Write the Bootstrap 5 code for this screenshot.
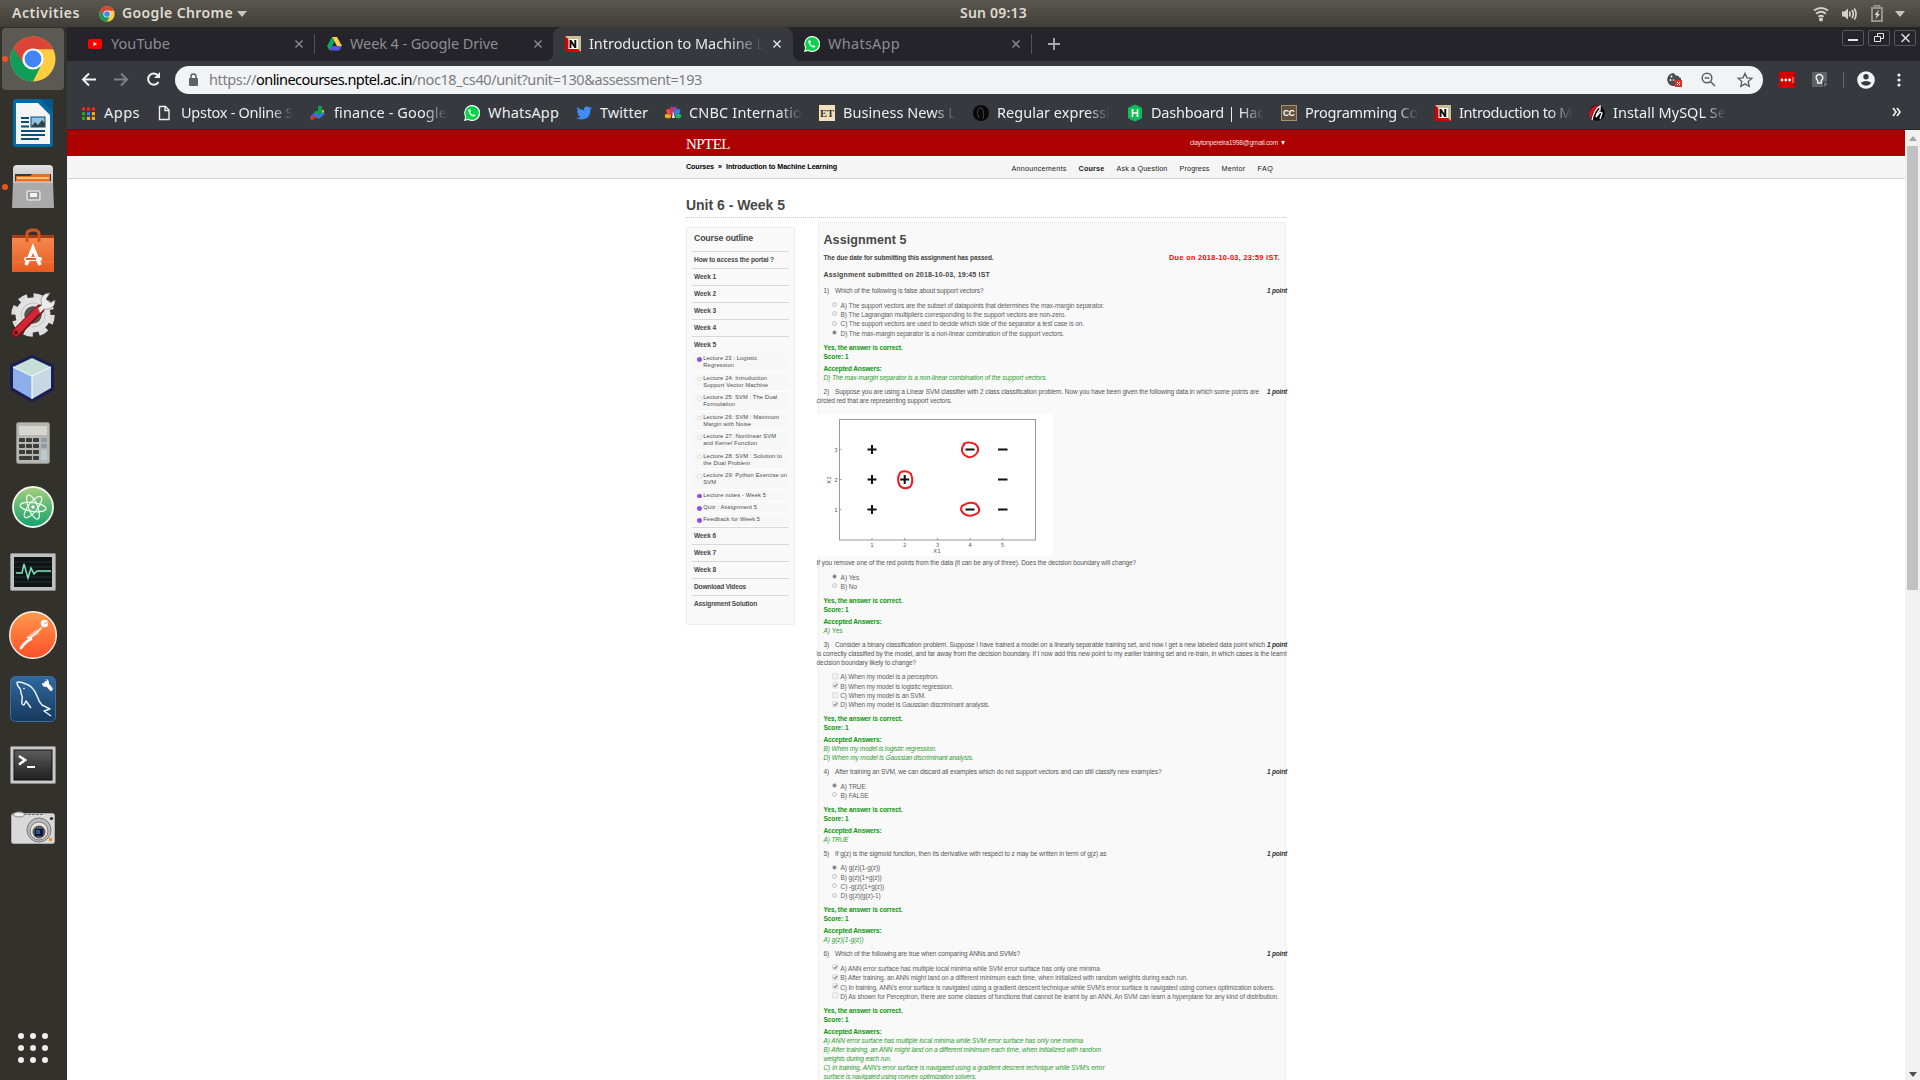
<!DOCTYPE html>
<html lang="en">
<head>
<meta charset="utf-8">
<title>Introduction to Machine Learning - Unit 6 - Week 5</title>
<link href="https://cdn.jsdelivr.net/npm/bootstrap@5.3.0/dist/css/bootstrap.min.css" rel="stylesheet">
<style>
html,body{height:1080px;overflow:hidden}
body{width:1920px;background:#fff;font-family:"Noto Sans","Open Sans",sans-serif;line-height:1}
svg{display:block;flex:none;overflow:visible}
[data-w]{display:inline-block;white-space:nowrap;flex:none}
/* desktop panel */
.panel{height:27px;background:linear-gradient(#5b5750,#403e39);color:#dfdbd2;font-size:14px;font-weight:600;padding:0 15px 0 12px}
.panel>div{flex:1}
.panel .clock{margin-left:70px}
.panel>*>span,.panel .clock{position:relative;top:-.5px}
.dock{width:67px;background:#33312c;flex:none}
.slot{height:64px;width:67px;flex:none;padding-left:1px}
/* browser */
.tabs{height:34px;background:#25242a;font-size:14.5px;color:#8c8d92}
.tab{height:34px;flex:none;padding-bottom:1px}
.tab.current{background:#36393e;color:#e9eaec;border-radius:9px 9px 0 0;width:240px;padding-left:12px;margin-left:7px;position:relative}
.tab.current:before,.tab.current:after{content:"";position:absolute;bottom:0;width:8px;height:8px}
.tab.current:before{left:-8px;background:radial-gradient(circle at 0 0,#25242a 8px,#36393e 8.5px)}
.tab.current:after{right:-8px;background:radial-gradient(circle at 100% 0,#25242a 8px,#36393e 8.5px)}
.vsep{width:1px;height:20px;background:#515257;flex:none}
.fade-end{-webkit-mask-image:linear-gradient(90deg,#000 80%,transparent)}
.winbtn{width:22px;height:16px;border:1px solid #58575c;border-radius:2px}
.tools{height:37px;background:#36393e}
.omni{height:28px;width:1588px;border-radius:14px;background:#f1f3f4;font-size:14.5px;color:#7b7d82}
.marks{height:32px;background:#36393e;border-bottom:1px solid #26282c;gap:17px;font-size:14.5px;color:#eceef0;padding-left:13px;padding-bottom:4px}
.marks .bm{gap:8px;height:28px}
.marks .bm>svg{margin-top:2px}
.marks .bm>span{line-height:20px}
/* course site */
.site{font-family:"Liberation Sans",Arial,sans-serif;color:#484848;width:1838px;height:950px;overflow:hidden}
.wrapw{width:600px;margin-left:619px}
.brandbar{background:#ad0000;height:26px;color:#fff}
.brand{font:15px/26px "Liberation Serif",serif;padding-top:1px}
.mail{font-size:6.8px;color:#f6dede}
.subbar{height:23px;background:#f5f5f5;border-top:1px solid #fff;border-bottom:1px solid #d4d4d4;font-size:7.2px;color:#222}
.unit{height:39px;border-bottom:1px dotted #c9c9c9;font-size:14px;font-weight:700;padding-top:18px;line-height:16px}
.outline-box{width:109px;height:398px;margin-top:9px;border:1px solid #ececec;border-radius:2px;background:#f9f9f9;padding:0 5px}
.outline-box .ttl{height:23px;line-height:20px;font-size:8.8px;font-weight:700;padding-left:2px}
.wk{height:17px;border-top:1px solid #d8d8d8;line-height:16px;font-size:6.6px;font-weight:700;padding-left:2px}
.lecs{height:174px;width:97px}
.lec{height:19.5px;border-bottom:1px solid #fff;background:#f7f7f7;font-size:5.8px;line-height:7px;color:#4c4c4c;padding:2.2px 0 0 5px;gap:1.6px}
.lec.one{height:12.4px}
.lec i{width:4.6px;height:4.6px;border-radius:50%;border:.6px solid #ddd;background:#fff;margin-top:2px;flex:none}
.lec i.on{background:#8a4fe8;border-color:#8a4fe8}
.paper{width:468px;margin-top:4px;height:860px;border:1px solid #efefef;border-radius:2px;background:#f9f9f9}
.ln{height:9px;line-height:9px;font-size:6.5px;display:flex;white-space:nowrap;padding-left:4.5px;color:#555}
.ln.strong{font-weight:700;color:#444}
.ln.wrapped{padding-left:0;margin-left:-2.4px}
.ln .num{width:11.5px;flex:none}
.ln .pt{margin-left:auto;margin-right:-2px;font-weight:700;font-style:italic;color:#333}
.opts{padding:5.67px 0 0 13px}
.op{height:9.33px;display:flex;font-size:6.5px;line-height:9px;color:#606060;white-space:nowrap}
.op i{width:5px;height:5px;border:.7px solid #c4c4c4;border-radius:50%;margin:1.200px 3.6px 0 0;flex:none;background:#f1f1f1}
.op i.on{background:radial-gradient(circle,#777 0 1.300px,#e6e6e6 1.9px)}
.op svg{margin:.6px 1.6px 0 -.4px}
.fb{padding-top:4.6px}
.fb .ln{color:#0b960b}
.fb .acc{margin-top:2.8px}
.fb .ln:not(.strong){font-style:italic;color:#2d9c2d}
.fb+.ln{margin-top:5px}
.first .acc{margin-top:3.500px}
.plot{margin:9px 0 2px -2px}
.scroller{width:15px;background:#f1f1f1;height:950px;padding:5px 2px 3px}
.thumb{height:444px;width:11px;background:#c1c1c1;margin-top:5px}
</style>
<script src="https://cdn.jsdelivr.net/npm/bootstrap@5.3.0/dist/js/bootstrap.bundle.min.js"></script>
</head>
<body>
<svg width="0" height="0" class="position-absolute">
<defs>
<linearGradient id="metal" x2="0" y2="1"><stop stop-color="#e2e2e2"/><stop offset="1" stop-color="#8b8b8b"/></linearGradient>
<linearGradient id="orange" x2="0" y2="1"><stop stop-color="#f68c52"/><stop offset="1" stop-color="#e85a20"/></linearGradient>
<linearGradient id="post" x2="0" y2="1"><stop stop-color="#ff9a4d"/><stop offset="1" stop-color="#ff4f28"/></linearGradient>
<linearGradient id="sea" x2="0" y2="1"><stop stop-color="#2f6aa0"/><stop offset="1" stop-color="#17385c"/></linearGradient>
<linearGradient id="leaf" x2="0" y2="1"><stop stop-color="#a5cf7c"/><stop offset="1" stop-color="#13a26c"/></linearGradient>
<linearGradient id="glass" x2="0" y2="1"><stop stop-color="#5c5c5c"/><stop offset="1" stop-color="#1f1f1f"/></linearGradient>
<symbol id="chrome" viewBox="-24 -24 48 48"><circle r="23" fill="#ffcd40"/><path d="M-19.900-11.500A23 23 0 0 1 19.900-11.500L20.600-10H0L-10 5z" fill="#db4437"/><path d="M-19.900-11.500A23 23 0 0 0 0 23L9 5-8.600 5z" fill="#0f9d58"/><path d="M-19.900-11.500L-9 6 2-10z" fill="#db4437"/><circle r="10.800" fill="#fff"/><circle r="8.600" fill="#4285f4"/></symbol>
<symbol id="wa" viewBox="0 0 16 16"><path d="M0 16L1.200 11.800A8 8 0 1 1 4.200 14.900z" fill="#fff"/><path d="M1.400 14.600l.9-3A6.800 6.800 0 1 1 4.400 13.700z" fill="#06d24a"/><path d="M5 4.200c-1 .8-.9 2.200 0 3.700 1 1.700 2.400 3 4.100 3.500 1 .3 2-.1 2.500-1l-1.900-1.300-1 .9C7.500 9.500 6.700 8.700 6.200 7.600l.8-.9L6.100 4.200z" fill="#fff"/></symbol>
<symbol id="npt" viewBox="0 0 16 16"><path d="M0 0h16v16H0z" fill="#c9bd93"/><path d="M0 0v16h16z" fill="#d40000"/><path d="M3.500 3H13v10H3.500z" fill="#fff"/><path d="M4.500 12V4h2l2.800 4.500V4h2v8h-2L6.500 7.600V12z" fill="#111"/></symbol>
<symbol id="tick" viewBox="0 0 7 7"><rect x=".6" y=".6" width="5.400" height="5.400" rx=".8" fill="#efefef" stroke="#cfcfcf" stroke-width=".6"/><path d="M1.800 3.400l1.200 1.300L5.100 1.900" fill="none" stroke="#555" stroke-width="1"/></symbol>
<symbol id="untick" viewBox="0 0 7 7"><rect x=".6" y=".6" width="5.400" height="5.400" rx=".8" fill="#f1f1f1" stroke="#cfcfcf" stroke-width=".6"/></symbol>
<symbol id="cls" viewBox="0 0 8 8"><path d="M.5.5l7 7m0-7l-7 7" stroke="currentColor" stroke-width="1.400"/></symbol>
</defs></svg>

<header class="panel d-flex align-items-center">
  <div class="d-flex align-items-center"><span data-w="68">Activities</span><svg style="margin-left:19px" width="16" height="16"><use href="#chrome"/></svg><span style="margin-left:7px" data-w="111">Google Chrome</span><svg class="ms-1" width="10" height="6"><path d="M0 0h10l-5 6z" fill="#c9c5bd"/></svg></div>
  <span class="clock" data-w="67">Sun 09:13</span>
  <div class="d-flex align-items-center justify-content-end">
    <svg width="16" height="16" fill="none" stroke="#d4d0c8" stroke-width="2"><path d="M1 4.500q7-5 14 0M3.200 7.800q4.800-4 9.600 0M5.400 10.800q2.600-2 5.200 0"/><circle cx="8" cy="13.500" r="1" fill="#d4d0c8"/></svg>
    <svg style="margin-left:12px" width="16" height="16" fill="none" stroke="#d4d0c8" stroke-width="1.700"><path d="M1 5.500h2.500L7 2.500v11L3.500 10.500H1z" fill="#d4d0c8" stroke="none"/><path d="M8.500 5.500q1.500 2.500 0 5M11 4q2.600 4 0 8M13.300 2.500q3.500 5.500 0 11"/></svg>
    <svg style="margin-left:14px" width="12" height="17"><path d="M3.500 2.500V.8h5v1.700" fill="none" stroke="#9a978f" stroke-width="1.600"/><rect x="1" y="3" width="10" height="13" fill="none" stroke="#9a978f" stroke-width="1.900"/><path d="M8 4.500L3.500 10h2.200L4.500 14 9 9H6.700z" fill="#e0dcd4"/></svg>
    <svg style="margin-left:12px" width="10" height="6"><path d="M0 0h10l-5 6z" fill="#c9c5bd"/></svg>
  </div>
</header>

<div class="d-flex">
<nav class="dock d-flex flex-column">
  <div class="slot"><svg width="64" height="64" viewBox="-32 -32 64 64"><rect x="-31" y="-31" width="62" height="62" rx="4" fill="#5b5954"/><circle cx="-28" r="3" fill="#e95420"/><use href="#chrome" x="-23.500" y="-23.500" width="47" height="47"/></svg></div>
  <div class="slot"><svg width="64" height="64" viewBox="-32 -32 64 64"><path d="M-20-21q0-3 3-3H8L20-12V21q0 3-3 3h-34q-3 0-3-3z" fill="#0369a3"/><path d="M-17-20H5L17-8V21h-34z" fill="#f4f4f4"/><path d="M7-24h13v13z" fill="#045788"/><path d="M-12-5h8m-8 4h8m-8 4.500h8m-8 4.500h24m-24 4h24m-24 4h18" stroke="#0b4f78" stroke-width="1.900"/><rect x="-2" y="-6" width="14" height="10" fill="#8fc4e2" stroke="#0b4f78"/><path d="M-2 4l4-5 3 3 4-5 3 3v4z" fill="#344"/></svg></div>
  <div class="slot"><svg width="64" height="64" viewBox="-32 -32 64 64"><circle cx="-28" r="3" fill="#e95420"/><path d="M-20-18q0-4 4-4h32q4 0 4 4v38q0 1-1 1h-38q-1 0-1-1z" fill="url(#metal)"/><path d="M-18-13h36v8h-36z" fill="#3a3a3a"/><path d="M-17-11H-3l3-2h17v8h-34z" fill="#e8701d"/><path d="M-16-9h32" stroke="#ffd9a6" stroke-width="1.500"/><path d="M-20-5h40l1 26h-42z" fill="#aaa"/><path d="M-20-5h40" stroke="#ddd"/><rect x="-6" y="4" width="13" height="9" rx="1.500" fill="#999" stroke="#ddd" stroke-width="1.600"/><rect x="-3" y="6" width="7" height="4" fill="#f3f3f3"/></svg></div>
  <div class="slot"><svg width="64" height="64" viewBox="-32 -32 64 64"><path d="M-21-16h42v37h-42z" fill="url(#orange)"/><path d="M-21-16h42v3h-42z" fill="#a63d14"/><path d="M-6-9v-8q0-4 6-4t6 4v8" fill="none" stroke="#d4531f" stroke-width="3"/><path d="M-21 11h42" stroke="#f27a45"/><path d="M-7 14L0-3 7 14" fill="none" stroke="#fff" stroke-width="3.600"/><rect x="-9" y="6" width="18" height="4" rx="2" fill="#fff"/><path d="M-7 8H3" stroke="#eb6126" stroke-width="2"/></svg></div>
  <div class="slot"><svg width="64" height="64" viewBox="-32 -32 64 64"><circle r="18.500" fill="none" stroke="#dcdcdc" stroke-width="6.500" stroke-dasharray="8.500 6.030"/><circle r="13" fill="none" stroke="#e2e2e2" stroke-width="9"/><circle r="12" fill="none" stroke="#c4c4c4" stroke-width="1"/><circle r="8.500" fill="#55534e"/><path d="M-17 18L7-6" stroke="#7c0e14" stroke-width="9" stroke-linecap="round"/><path d="M-17 17.500L5-5" stroke="#cf2733" stroke-width="6.500" stroke-linecap="round"/><circle cx="-17" cy="17.500" r="2" fill="#5c0d12"/><path d="M5-7l4-3q-3-7 3-11l5-1-4 6 4 4 5-3q0 8-7 9l-4 0-4 4z" fill="#ececec" stroke="#888" stroke-width=".7"/></svg></div>
  <div class="slot"><svg width="64" height="64" viewBox="-32 -32 64 64"><path d="M-1-22L19-13V10L-1 21-21 10V-13z" fill="#6b7fae" stroke="#1a1e52" stroke-width="4" stroke-linejoin="round"/><path d="M-1-21L18-12-1-3-20-12z" fill="#c7dfd9"/><path d="M-20-12L-1-3V20L-20 9z" fill="#8eaee9"/><path d="M18-12L-1-3V20L18 9z" fill="#c5d8e4"/><path d="M-20-12L-1-3 18-12M-1-3V20" stroke="#edf5fb" stroke-width="1.300" fill="none"/></svg></div>
  <div class="slot"><svg width="64" height="64" viewBox="-32 -32 64 64"><rect x="-16.500" y="-20.500" width="33" height="41" rx="2" fill="#b5b5b2" stroke="#8b8b88"/><rect x="-14" y="-17" width="28" height="9" fill="#d6d6d0"/><g fill="#3a3d3b"><rect x="-14" y="-5" width="6" height="4" rx="1"/><rect x="-7" y="-5" width="6" height="4" rx="1"/><rect x="0" y="-5" width="6" height="4" rx="1"/><rect x="-14" y="1" width="6" height="4" rx="1"/><rect x="-7" y="1" width="6" height="4" rx="1"/><rect x="0" y="1" width="6" height="4" rx="1"/><rect x="-14" y="7" width="6" height="4" rx="1"/><rect x="-7" y="7" width="6" height="4" rx="1"/><rect x="0" y="7" width="6" height="4" rx="1"/><rect x="-14" y="13" width="13" height="4" rx="1"/><rect x="0" y="13" width="6" height="4" rx="1"/></g><g fill="#8a9da7"><rect x="8" y="-5" width="6" height="4" rx="1"/><rect x="8" y="1" width="6" height="4" rx="1"/><rect x="8" y="7" width="6" height="10" rx="1" fill="#b9c9d1"/></g></svg></div>
  <div class="slot"><svg width="64" height="64" viewBox="-32 -32 64 64"><circle r="20" fill="url(#leaf)" stroke="#f2f6f1" stroke-width="1.800"/><g fill="none" stroke="#f3faf4" stroke-width="1.200"><ellipse rx="13" ry="4.500" transform="rotate(8)"/><ellipse rx="13" ry="4.500" transform="rotate(68)"/><ellipse rx="13" ry="4.500" transform="rotate(-52)"/></g><circle r="1.800" fill="#fff"/></svg></div>
  <div class="slot"><svg width="64" height="64" viewBox="-32 -32 64 64"><rect x="-22.500" y="-17.500" width="45" height="37" rx="1" fill="#c0c0c0" stroke="#8b8b8b"/><rect x="-19" y="-14" width="38" height="30" fill="#0c1514"/><path d="M-19-9h38m-38 5h38m-38 5h38m-38 5h38m-38 5h38" stroke="#28312f"/><path d="M-17 2h6l2-9 4 14 3-10 3 6 3-3h14" fill="none" stroke="#7fe3c0" stroke-width="1.500"/></svg></div>
  <div class="slot"><svg width="64" height="64" viewBox="-32 -32 64 64"><circle r="23.300" fill="url(#post)" stroke="#fff3ea" stroke-width="1.400"/><circle cx="11.500" cy="-11.500" r="3.700" fill="#fff"/><path d="M9-8L2-4l-9 7 4 1 8-5 4-6" fill="#fff"/><path d="M-2 4q-6 3-10 9" fill="none" stroke="#fff" stroke-width="2.800" stroke-linecap="round"/><path d="M-4 2L6-6M-1 3l8-7M11.500-11.500l3-1" stroke="#ff7b48" stroke-width=".9"/></svg></div>
  <div class="slot"><svg width="64" height="64" viewBox="-32 -32 64 64"><rect x="-22.500" y="-22.500" width="45" height="45" rx="5" fill="url(#sea)" stroke="#3c6f9e"/><path d="M-2 9l-5-7-2 4q-3 0-2-5 1-3-1-7 0-4-3-7-2-4 0-4 4 0 8 2 7 2 11 12 2 6 5 9l8 4-6 2 7 5" fill="none" stroke="#e6f1fa" stroke-width="1.500" stroke-linejoin="round"/><circle cx="-9" cy="-10.500" r=".8" fill="#fff"/><path d="M13-16l5 6" stroke="#fff" stroke-width="3.600" stroke-linecap="round"/><path d="M12-20q3 1 1 3t-4 1q0 4 4 4l3-4q0-4-4-4z" fill="#fff"/></svg></div>
  <div class="slot"><svg width="64" height="64" viewBox="-32 -32 64 64"><rect x="-22.500" y="-16.500" width="45" height="37" rx="1" fill="#c9c9c9" stroke="#888"/><rect x="-19" y="-13" width="38" height="30" fill="url(#glass)" stroke="#111"/><path d="M-14-7l6 4-6 4.500" fill="none" stroke="#fff" stroke-width="2.600"/><path d="M-6 4h8" stroke="#fff" stroke-width="2"/></svg></div>
  <div class="slot"><svg width="64" height="64" viewBox="-32 -32 64 64"><rect x="-21.500" y="-13.500" width="43" height="30" rx="2" fill="#d9d9d9" stroke="#aaa"/><path d="M-21-12.500H10" stroke="#777" stroke-dasharray="3 1"/><ellipse cx="-14" cy="-12.500" rx="5.500" ry="2.500" fill="#eee" stroke="#888"/><circle cx="6" cy="3" r="12" fill="#bcbcbc" stroke="#777"/><circle cx="6" cy="4" r="9" fill="#e6e6e6" stroke="#777"/><circle cx="6" cy="5" r="6.500" fill="#555"/><path d="M2 2h8v7H2z" fill="#0b1530"/><path d="M3 3h4v4H3z" fill="#2458a0"/><circle cx="18.500" cy="-8.500" r="1.600" fill="#222"/><path d="M16 11h3v3h-3z" fill="#e89222"/></svg></div>
  <svg style="margin-top:168px" width="66" height="53" viewBox="0 0 66 53" fill="#efefed"><g id="r3"><circle cx="21" cy="9" r="3"/><circle cx="33" cy="9" r="3"/><circle cx="45" cy="9" r="3"/></g><use href="#r3" y="12"/><use href="#r3" y="24"/></svg>
</nav>

<div class="flex-grow-1">
<div class="tabs d-flex">
  <div class="tab d-flex align-items-center" style="width:247px;padding-left:21px"><svg width="14" height="10"><rect width="14" height="10" rx="2" fill="#f00"/><path d="M5.500 3v4L9 5z" fill="#fff"/></svg><span style="margin-left:9px" data-w="59">YouTube</span><svg class="ms-auto" style="margin-right:11px" width="8" height="8"><use href="#cls"/></svg></div>
  <div class="vsep align-self-center"></div>
  <div class="tab d-flex align-items-center" style="width:231px;padding-left:12px"><svg width="15" height="14" viewBox="0 0 15 14"><path d="M5 0h5l5 9h-5z" fill="#ffcf48"/><path d="M5 0L0 9l2.500 4.500L7.500 4.500z" fill="#0da960"/><path d="M5 9h10l-2.500 4.500h-10z" fill="#5256e8"/></svg><span class="ms-2" data-w="148">Week 4 - Google Drive</span><svg class="ms-auto" style="margin-right:4px" width="8" height="8"><use href="#cls"/></svg></div>
  <div class="tab current d-flex align-items-center"><svg width="16" height="16"><use href="#npt"/></svg><span class="ms-2 fade-end" data-w="175">Introduction to Machine L</span><svg class="ms-auto" style="margin-right:12px" width="8" height="8"><use href="#cls"/></svg></div>
  <div class="tab d-flex align-items-center" style="width:238px;padding-left:11px"><svg width="16" height="16"><use href="#wa"/></svg><span class="ms-2" data-w="72">WhatsApp</span><svg class="ms-auto" style="margin-right:11px" width="8" height="8"><use href="#cls"/></svg></div>
  <div class="vsep align-self-center"></div>
  <svg class="align-self-center" style="margin-left:16px" width="12" height="12"><path d="M6 0v12M0 6h12" stroke="#aaabae" stroke-width="1.800"/></svg>
  <div class="d-flex ms-auto gap-1 me-1" style="margin-top:3px;color:#e6e6e6">
    <span class="winbtn"><svg width="20" height="14"><path d="M5 9h10" stroke="currentColor" stroke-width="2"/></svg></span>
    <span class="winbtn"><svg width="20" height="14" fill="none" stroke="currentColor"><path d="M5.500 5.500h6v5h-6zM8.500 5.500v-3h6v5h-3"/></svg></span>
    <span class="winbtn"><svg width="20" height="14"><path d="M6.500 3l8 8m0-8l-8 8" stroke="currentColor" stroke-width="1.400"/></svg></span>
  </div>
</div>
<div class="tools d-flex align-items-center">
  <svg style="margin-left:14px" width="94" height="20" fill="none" stroke="#f2f3f4" stroke-width="2"><path d="M15 9.500H2m6-6l-6 6 6 6"/><path d="M33 9.500h13m-6-6l6 6-6 6" stroke="#7f8185"/><path d="M77 5.500A5.600 5.600 0 1 0 77.500 12"/><path d="M79 2v6h-6z" fill="#f2f3f4" stroke="none"/></svg>
  <div class="omni d-flex align-items-center"><svg style="margin-left:14px" width="9" height="13"><rect y="5" width="9" height="8" rx="1" fill="#5d6065"/><path d="M2 6V3.500Q2 1 4.500 1T7 3.500V6" fill="none" stroke="#5d6065" stroke-width="1.500"/></svg><span style="margin-left:11px" data-w="47">https://</span><span class="text-black" data-w="156">onlinecourses.nptel.ac.in</span><span data-w="290">/noc18_cs40/unit?unit=130&amp;assessment=193</span>
    <div class="d-flex ms-auto align-items-center" style="margin-right:10px;gap:18px"><svg width="16" height="16"><path d="M7 1a6.500 6.500 0 1 0 6 8q1.500-.5 1-3-2 0-2.500-2Q8 4 7 1z" fill="#4a4d52"/><circle cx="4.500" cy="4.500" r="1" fill="#fff"/><circle cx="3.500" cy="8" r=".9" fill="#fff"/><circle cx="6.500" cy="8" r=".8" fill="#fff"/><rect x="8" y="8" width="7" height="7" fill="#dc3426"/><path d="M10 10l3 3m0-3l-3 3" stroke="#fff"/></svg><svg width="15" height="15" fill="none" stroke="#5d6065" stroke-width="1.500"><circle cx="6" cy="6" r="4.800"/><path d="M9.500 9.500l4.500 4.500M3.700 6h4.600"/></svg><svg style="margin-left:3px" width="16" height="16" viewBox="0 0 16 16"><path d="M8 1.500l2 4.400 4.800.5-3.600 3.200 1 4.700L8 11.900l-4.200 2.400 1-4.700L1.200 6.400 6 5.900z" fill="none" stroke="#5d6065" stroke-width="1.400"/></svg></div></div>
  <svg class="ms-3" width="16" height="16"><rect width="16" height="16" fill="#d50000"/><circle cx="3" cy="8" r="1.400" fill="#fff"/><circle cx="6.800" cy="8" r="1.400" fill="#fff"/><circle cx="10.600" cy="8" r="1.400" fill="#fff"/><path d="M14 5v6" stroke="#f7aaaa"/></svg>
  <svg style="margin-left:17px" width="15" height="15"><path d="M0 0h15v10h-4v5H0z" fill="#606164"/><path d="M15 11v1l-3 3v-4z" fill="#77787b"/><path d="M5.700 8.500Q4.200 7.300 4.200 5.800a3.300 3.300 0 0 1 6.600 0q0 1.500-1.500 2.700v2.500H5.700z" fill="none" stroke="#eee" stroke-width="1.500"/></svg>
  <div class="vsep" style="margin-left:16px;height:16px;background:#66686d"></div>
  <svg style="margin-left:13px" width="18" height="18"><circle cx="9" cy="9" r="8.800" fill="#f1f3f4"/><circle cx="9" cy="5.800" r="2.700" fill="#36393e"/><path d="M3.700 11.800q5.300-3.500 10.600 0-2 3-5.300 3t-5.300-3z" fill="#36393e"/></svg>
  <svg style="margin-left:22px" width="4" height="14" fill="#f1f3f4"><circle cx="2" cy="2" r="1.600"/><circle cx="2" cy="7" r="1.600"/><circle cx="2" cy="12" r="1.600"/></svg>
</div>
<div class="marks d-flex align-items-center">
  <div class="bm d-flex align-items-center"><svg width="16" height="16" viewBox="0 0 16 16"><path d="M2 4h13" stroke="#f22" stroke-width="3.200" stroke-dasharray="3.200 1.700"/><path d="M2 8.700h3.200" stroke="#2a2" stroke-width="3.200"/><path d="M6.900 8.700h3.200" stroke="#47f" stroke-width="3.200"/><path d="M11.800 8.700H15" stroke="#fa1" stroke-width="3.200"/><path d="M2 13.400h3.200" stroke="#2a2" stroke-width="3.200"/><path d="M6.900 13.400H15" stroke="#fa1" stroke-width="3.200" stroke-dasharray="3.200 1.700"/></svg><span data-w="36">Apps</span></div>
  <div class="bm d-flex align-items-center"><svg width="16" height="16"><path d="M2.500 1.500h6l3.500 3.500v9.500H2.500zM8 2v3.500h4" fill="none" stroke="#eee" stroke-width="1.400"/></svg><span class="fade-end" data-w="112">Upstox - Online S</span></div>
  <div class="bm d-flex align-items-center"><svg width="16" height="16"><path d="M5 6h3v7H5zM8 1h4v9H8z" fill="#0da14b"/><path d="M12 5h2v5h-2z" fill="#f4b400"/><path d="M1 13l4-4 4 3 5-4" fill="none" stroke="#3b6ff0" stroke-width="2.800"/><path d="M1 15l4-4" stroke="#e0281c" stroke-width="3"/></svg><span class="fade-end" data-w="113">finance - Google</span></div>
  <div class="bm d-flex align-items-center"><svg width="16" height="16"><use href="#wa"/></svg><span data-w="71">WhatsApp</span></div>
  <div class="bm d-flex align-items-center"><svg width="16" height="16"><path d="M0 13q3 0 4.500-1.500Q2 11 1.700 9h1.400Q.8 8 .7 5.700l1.400.4Q0 4 1.400 2 4 5 8 5.200 7.500 1.700 11 1.500q1.500 0 2.400 1L15.500 1.700l-1.300 1.700L16 3l-1.600 1.700Q14.600 14 5.500 14.400 2.500 14.400 0 13z" fill="#3f8cf4"/></svg><span data-w="48">Twitter</span></div>
  <div class="bm d-flex align-items-center"><svg width="16" height="16"><ellipse cx="3" cy="11" rx="3.200" ry="2.300" fill="#f5a81c"/><ellipse cx="4" cy="7" rx="2.300" ry="3.500" fill="#ee5525" transform="rotate(-35 4 7)"/><ellipse cx="6.800" cy="5.500" rx="2" ry="4" fill="#d1306a"/><ellipse cx="10" cy="5.500" rx="2" ry="4" fill="#7a52b5"/><ellipse cx="12.500" cy="7" rx="2.300" ry="3.500" fill="#2d87d8" transform="rotate(35 12.500 7)"/><ellipse cx="13.300" cy="11" rx="3" ry="2.300" fill="#25b65b"/><path d="M8 6L7 13h3z" fill="#eee"/></svg><span class="fade-end" data-w="113">CNBC Internatio</span></div>
  <div class="bm d-flex align-items-center"><svg width="16" height="16"><rect width="16" height="16" fill="#f5dfbd"/><text x="1" y="12" font-family="Liberation Serif,serif" font-weight="700" font-size="10.500" fill="#333" textLength="14">ET</text></svg><span class="fade-end" data-w="113">Business News L</span></div>
  <div class="bm d-flex align-items-center"><svg width="16" height="16"><circle cx="8" cy="8" r="8" fill="#080808"/><path d="M6 13q-3-7 0-10 3-1 4 2 1 5 0 9" fill="none" stroke="#444" stroke-width="1"/></svg><span class="fade-end" data-w="113">Regular expressi</span></div>
  <div class="bm d-flex align-items-center"><svg width="16" height="16"><path d="M8 0l6.500 3v10L8 16l-6.500-3V3z" fill="#0dbf57" stroke="#0dbf57" stroke-linejoin="round"/><path d="M5.500 4v8m5-8v8m-5-4h5M4.500 5h2m3 6h2" stroke="#fff" stroke-width="1.600"/></svg><span class="fade-end" data-w="113">Dashboard | Hac</span></div>
  <div class="bm d-flex align-items-center"><svg width="16" height="16"><rect x=".5" y=".5" width="15" height="15" fill="#64503c" stroke="#a69072"/><text x="2" y="11" font-family="Liberation Sans,sans-serif" font-weight="700" font-size="8.500" fill="#fff" textLength="12">CC</text></svg><span class="fade-end" data-w="113">Programming Co</span></div>
  <div class="bm d-flex align-items-center"><svg width="16" height="16"><use href="#npt"/></svg><span class="fade-end" data-w="113">Introduction to M</span></div>
  <div class="bm d-flex align-items-center"><svg width="16" height="16"><circle cx="8" cy="8" r="7.800" fill="#090909"/><path d="M12 1Q6-1 2 4t0 10Q5 3 12 1z" fill="#d4131d"/><path d="M3 15Q5 5 11 1v4q-3 2-4 7l4-5 2 1-2 6" fill="none" stroke="#fff" stroke-width="1.300"/></svg><span class="fade-end" data-w="113">Install MySQL Se</span></div>
  <svg class="ms-auto" style="margin-right:19px" width="9" height="8"><path d="M1 0l3 4-3 4M5 0l3 4-3 4" fill="none" stroke="#eee" stroke-width="1.700"/></svg>
</div>

<div class="d-flex" style="height:950px">
<main class="site">
  <div class="brandbar"><div class="wrapw d-flex justify-content-between align-items-center"><span class="brand" data-w="44">NPTEL</span><span class="mail d-flex align-items-center"><span data-w="88">claytonpereira1998@gmail.com</span><svg style="margin:0 1px 0 3px" width="4" height="4"><path d="M0 0h4L2 4z" fill="#fff"/></svg></span></div></div>
  <div class="subbar"><div class="wrapw d-flex"><div class="fw-bold text-black" style="padding-top:6px"><span data-w="28">Courses</span><span style="margin:0 4px">»</span><span data-w="111">Introduction to Machine Learning</span></div><div class="d-flex ms-auto" style="gap:12px;padding-top:8px;margin-right:12.500px"><span data-w="55">Announcements</span><b data-w="26">Course</b><span data-w="51">Ask a Question</span><span data-w="30">Progress</span><span data-w="24">Mentor</span><span data-w="16">FAQ</span></div></div></div>
  <div class="wrapw">
    <div class="unit"><span data-w="99">Unit 6 - Week 5</span></div>
    <div class="d-flex justify-content-between align-items-start">
      <aside class="outline-box">
        <div class="ttl"><span data-w="59">Course outline</span></div>
        <div class="wk"><span data-w="80">How to access the portal ?</span></div>
        <div class="wk"><span data-w="22">Week 1</span></div><div class="wk"><span data-w="22">Week 2</span></div><div class="wk"><span data-w="22">Week 3</span></div><div class="wk"><span data-w="22">Week 4</span></div><div class="wk"><span data-w="22">Week 5</span></div>
        <div class="lecs">
          <div class="lec d-flex"><i class="on"></i><div><span data-w="54">Lecture 23 : Logistic</span><br><span data-w="31">Regression</span></div></div>
          <div class="lec d-flex"><i></i><div><span data-w="64">Lecture 24: Introduction</span><br><span data-w="65">Support Vector Machine</span></div></div>
          <div class="lec d-flex"><i></i><div><span data-w="74">Lecture 25: SVM : The Dual</span><br><span data-w="32">Formulation</span></div></div>
          <div class="lec d-flex"><i></i><div><span data-w="76">Lecture 26: SVM : Maximum</span><br><span data-w="48">Margin with Noise</span></div></div>
          <div class="lec d-flex"><i></i><div><span data-w="73">Lecture 27: Nonlinear SVM</span><br><span data-w="54">and Kernel Function</span></div></div>
          <div class="lec d-flex"><i></i><div><span data-w="79">Lecture 28: SVM : Solution to</span><br><span data-w="47">the Dual Problem</span></div></div>
          <div class="lec d-flex"><i></i><div><span data-w="84">Lecture 29: Python Exercise on</span><br><span data-w="13">SVM</span></div></div>
          <div class="lec one d-flex"><i class="on"></i><span data-w="63">Lecture notes - Week 5</span></div>
          <div class="lec one d-flex"><i class="on"></i><span data-w="54">Quiz : Assignment 5</span></div>
          <div class="lec one d-flex"><i class="on"></i><span data-w="57">Feedback for Week 5</span></div>
        </div>
        <div class="wk"><span data-w="22">Week 6</span></div><div class="wk"><span data-w="22">Week 7</span></div><div class="wk"><span data-w="22">Week 8</span></div><div class="wk"><span data-w="52">Download Videos</span></div><div class="wk"><span data-w="63">Assignment Solution</span></div>
      </aside>
      <section class="paper">
        <div class="fw-bold" style="padding:10px 0 0 4.500px;font-size:12.500px;line-height:15px;height:30px"><span data-w="83">Assignment 5</span></div>
        <div class="ln strong"><span data-w="170">The due date for submitting this assignment has passed.</span><span class="ms-auto text-danger" style="margin-right:5px;color:#f00!important;font-size:7.300px" data-w="111">Due on 2018-10-03, 23:59 IST.</span></div>
        <div class="ln strong" style="margin:8px 0 7px;font-size:7px"><span data-w="166.500">Assignment submitted on 2018-10-03, 19:45 IST</span></div>

        <div class="ln"><span class="num">1)</span><span data-w="148.500">Which of the following is false about support vectors?</span><span class="pt" data-w="20">1 point</span></div>
        <div class="opts"><div class="op"><i></i><span data-w="263.500">A) The support vectors are the subset of datapoints that determines the max-margin separator.</span></div><div class="op"><i></i><span data-w="225.500">B) The Lagrangian multipliers corresponding to the support vectors are non-zero.</span></div><div class="op"><i></i><span data-w="243.500">C) The support vectors are used to decide which side of the separator a test case is on.</span></div><div class="op"><i class="on"></i><span data-w="223.500">D) The max-margin separator is a non-linear combination of the support vectors.</span></div></div>
        <div class="fb first"><div class="ln strong"><span data-w="79">Yes, the answer is correct.</span></div><div class="ln strong"><span data-w="25">Score: 1</span></div><div class="ln strong acc"><span data-w="58">Accepted Answers:</span></div><div class="ln"><span data-w="223.500">D) The max-margin separator is a non-linear combination of the support vectors.</span></div></div>

        <div class="ln"><span class="num">2)</span><span data-w="424">Suppose you are using a Linear SVM classifier with 2 class classification problem. Now you have been given the following data in which some points are</span><span class="pt" data-w="20">1 point</span></div>
        <div class="ln wrapped"><span data-w="135.500">circled red that are representing support vectors.</span></div>
        <svg class="plot" width="236" height="142" viewBox="817 414 236 142" font-family="DejaVu Sans,sans-serif" font-size="5.500" fill="#555">
          <rect x="817" y="414" width="236" height="142" fill="#fff"/>
          <rect x="839.500" y="419.500" width="196" height="120.500" fill="none" stroke="#999"/>
          <path d="M872 540v-2m32.700 2v-2m32.700 2v-2m32.700 2v-2m32.700 2v-2M839.500 449.500h2m-2 30h2m-2 30h2" stroke="#777" stroke-width=".7"/>
          <g stroke="#111" stroke-width="2"><path d="M867.500 449.500h9m-4.500-4.500v9M867.500 479.500h9m-4.500-4.500v9M867.500 509.500h9m-4.500-4.500v9M900.200 479.500h9m-4.500-4.500v9M965.500 449.500h9M965.500 509.500h9M998 449.500h9.500M998 479.500h9.500M998 509.500h9.500"/></g>
          <g fill="none" stroke="#f0191e" stroke-width="2"><path d="M963 444q5-3 12 0 5 4 2 9-4 5-9 4-7-3-6-9 1-3 3-4"/><path d="M901 472q6-2 10 2 3 8-1 13-6 3-10-1-4-7 0-13z"/><path d="M964 505q5-4 12-1 5 5 2 9-6 4-12 2-7-4-4-9z"/></g>
          <g text-anchor="middle"><text x="872" y="547">1</text><text x="904.700" y="547">2</text><text x="937.500" y="547">3</text><text x="970" y="547">4</text><text x="1002.600" y="547">5</text><text x="937" y="553">X1</text><text x="836" y="451.500">3</text><text x="836" y="481.500">2</text><text x="836" y="511.500">1</text><text transform="translate(830.500 480)rotate(-90)">X2</text></g>
        </svg>
        <div class="ln wrapped"><span data-w="319.500">If you remove one of the red points from the data (it can be any of three). Does the decision boundary will change?</span></div>
        <div class="opts"><div class="op"><i class="on"></i><span data-w="18.500">A) Yes</span></div><div class="op"><i></i><span data-w="16.500">B) No</span></div></div>
        <div class="fb"><div class="ln strong"><span data-w="79">Yes, the answer is correct.</span></div><div class="ln strong"><span data-w="25">Score: 1</span></div><div class="ln strong acc"><span data-w="58">Accepted Answers:</span></div><div class="ln"><span data-w="19">A) Yes</span></div></div>

        <div class="ln"><span class="num">3)</span><span data-w="430">Consider a binary classification problem. Suppose I have trained a model on a linearly separable training set, and now I get a new labeled data point which</span><span class="pt" data-w="20">1 point</span></div>
        <div class="ln wrapped"><span data-w="470">is correctly classified by the model, and far away from the decision boundary. If I now add this new point to my earlier training set and re-train, in which cases is the learnt</span></div>
        <div class="ln wrapped"><span data-w="99.500">decision boundary likely to change?</span></div>
        <div class="opts"><div class="op"><svg width="7" height="7"><use href="#untick"/></svg><span data-w="98.500">A) When my model is a perceptron.</span></div><div class="op"><svg width="7" height="7"><use href="#tick"/></svg><span data-w="113">B) When my model is logistic regression.</span></div><div class="op"><svg width="7" height="7"><use href="#untick"/></svg><span data-w="85.500">C) When my model is an SVM.</span></div><div class="op"><svg width="7" height="7"><use href="#tick"/></svg><span data-w="149.500">D) When my model is Gaussian discriminant analysis.</span></div></div>
        <div class="fb"><div class="ln strong"><span data-w="79">Yes, the answer is correct.</span></div><div class="ln strong"><span data-w="25">Score: 1</span></div><div class="ln strong acc"><span data-w="58">Accepted Answers:</span></div><div class="ln"><span data-w="113">B) When my model is logistic regression.</span></div><div class="ln"><span data-w="150">D) When my model is Gaussian discriminant analysis.</span></div></div>

        <div class="ln"><span class="num">4)</span><span data-w="326.500">After training an SVM, we can discard all examples which do not support vectors and can still classify new examples?</span><span class="pt" data-w="20">1 point</span></div>
        <div class="opts"><div class="op"><i class="on"></i><span data-w="25">A) TRUE</span></div><div class="op"><i></i><span data-w="28">B) FALSE</span></div></div>
        <div class="fb"><div class="ln strong"><span data-w="79">Yes, the answer is correct.</span></div><div class="ln strong"><span data-w="25">Score: 1</span></div><div class="ln strong acc"><span data-w="58">Accepted Answers:</span></div><div class="ln"><span data-w="25">A) TRUE</span></div></div>

        <div class="ln"><span class="num">5)</span><span data-w="271.500">If g(z) is the sigmoid function, then its derivative with respect to z may be written in term of g(z) as</span><span class="pt" data-w="20">1 point</span></div>
        <div class="opts"><div class="op"><i class="on"></i><span data-w="39.500">A) g(z)(1-g(z))</span></div><div class="op"><i></i><span data-w="41">B) g(z)(1+g(z))</span></div><div class="op"><i></i><span data-w="43.500">C) -g(z)(1+g(z))</span></div><div class="op"><i></i><span data-w="40">D) g(z)(g(z)-1)</span></div></div>
        <div class="fb"><div class="ln strong"><span data-w="79">Yes, the answer is correct.</span></div><div class="ln strong"><span data-w="25">Score: 1</span></div><div class="ln strong acc"><span data-w="58">Accepted Answers:</span></div><div class="ln"><span data-w="40">A) g(z)(1-g(z))</span></div></div>

        <div class="ln"><span class="num">6)</span><span data-w="185">Which of the following are true when comparing ANNs and SVMs?</span><span class="pt" data-w="20">1 point</span></div>
        <div class="opts"><div class="op"><svg width="7" height="7"><use href="#tick"/></svg><span data-w="259.500">A) ANN error surface has multiple local minima while SVM error surface has only one minima</span></div><div class="op"><svg width="7" height="7"><use href="#tick"/></svg><span data-w="347.500">B) After training, an ANN might land on a different minimum each time, when initialized with random weights during each run.</span></div><div class="op"><svg width="7" height="7"><use href="#tick"/></svg><span data-w="434.500">C) In training, ANN's error surface is navigated using a gradient descent technique while SVM's error surface is navigated using convex optimization solvers.</span></div><div class="op"><svg width="7" height="7"><use href="#untick"/></svg><span data-w="438.500">D) As shown for Perceptron, there are some classes of functions that cannot be learnt by an ANN. An SVM can learn a hyperplane for any kind of distribution.</span></div></div>
        <div class="fb"><div class="ln strong"><span data-w="79">Yes, the answer is correct.</span></div><div class="ln strong"><span data-w="25">Score: 1</span></div><div class="ln strong acc"><span data-w="58">Accepted Answers:</span></div><div class="ln"><span data-w="259.500">A) ANN error surface has multiple local minima while SVM error surface has only one minima</span></div><div class="ln"><span data-w="277.500">B) After training, an ANN might land on a different minimum each time, when initialized with random</span></div><div class="ln"><span data-w="68">weights during each run.</span></div><div class="ln"><span data-w="281">C) In training, ANN's error surface is navigated using a gradient descent technique while SVM's error</span></div><div class="ln"><span data-w="153">surface is navigated using convex optimization solvers.</span></div></div>
      </section>
    </div>
  </div>
</main>
<div class="scroller d-flex flex-column align-items-center"><svg width="8" height="5" style="margin-top:1px"><path d="M0 5h8L4 0z" fill="#a3a3a3"/></svg><div class="thumb"></div><svg class="mt-auto" width="8" height="5"><path d="M0 0h8L4 5z" fill="#505050"/></svg></div>
</div>
</div>
</div>
<script>
document.querySelectorAll('[data-w]').forEach(function(el){
  var w=parseFloat(el.dataset.w), n=el.textContent.length;
  el.style.letterSpacing=((w-el.getBoundingClientRect().width)/n)+'px';
  el.style.width=w+'px';
});
</script>
</body>
</html>
